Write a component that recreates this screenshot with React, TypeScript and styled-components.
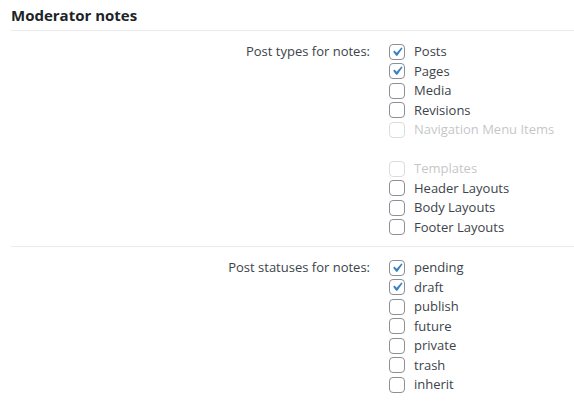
import { createGlobalStyle } from 'styled-components';
import styled from 'styled-components';

const GlobalStyle = createGlobalStyle`
  html, body {
    margin: 0;
    padding: 0;
    background: #ffffff;
  }
  body {
    font-family: "Open Sans", "Liberation Sans", Arial, sans-serif;
    font-size: 13px;
    color: #3c434a;
  }
`;

const Page = styled.div`
  padding: 6px 0 0 11px;
`;

const Title = styled.h2`
  margin: 0;
  padding-bottom: 5px;
  font-size: 15px;
  font-weight: 700;
  color: #1d2327;
  line-height: 19px;
  border-bottom: 1px solid #ececec;
`;

const Section = styled.div<{ $last?: boolean }>`
  display: grid;
  grid-template-columns: 359px 1fr;
  column-gap: 19px;
  padding: 11px 0 9px;
  border-bottom: 1px solid ${p => (p.$last ? 'transparent' : '#ececec')};
`;

const Label = styled.div`
  text-align: right;
  line-height: 19.5px;
  color: #3c434a;
`;

const List = styled.ul`
  list-style: none;
  margin: 0;
  padding: 0;
`;

const Item = styled.li<{ $disabled?: boolean }>`
  display: flex;
  align-items: center;
  gap: 9px;
  height: 19.5px;
  opacity: ${p => (p.$disabled ? 0.3 : 1)};
`;

const Spacer = styled.li`
  height: 19.5px;
`;

const Box = styled.span`
  box-sizing: border-box;
  width: 16px;
  height: 16px;
  border: 1px solid #8c8f94;
  border-radius: 4px;
  background: #fff;
  display: flex;
  align-items: center;
  justify-content: center;
  flex: none;
`;

const ItemText = styled.span`
  color: #3c434a;
  line-height: 19.5px;
`;

type Opt = { label: string; checked?: boolean; disabled?: boolean; gap?: boolean };

function Check({ checked }: { checked?: boolean }) {
  return (
    <Box>
      {checked && (
        <svg width="20" height="20" viewBox="0 0 20 20" style={{ margin: '-2px' }}>
          <path d="M14.83 4.89l1.34.94-5.81 8.38H9.02L5.78 9.67l1.34-1.25 2.57 2.4z" fill="#3582c4" />
        </svg>
      )}
    </Box>
  );
}

const postTypes: Opt[] = [
  { label: 'Posts', checked: true },
  { label: 'Pages', checked: true },
  { label: 'Media' },
  { label: 'Revisions' },
  { label: 'Navigation Menu Items', disabled: true },
  { label: '', gap: true },
  { label: 'Templates', disabled: true },
  { label: 'Header Layouts' },
  { label: 'Body Layouts' },
  { label: 'Footer Layouts' },
];

const statuses: Opt[] = [
  { label: 'pending', checked: true },
  { label: 'draft', checked: true },
  { label: 'publish' },
  { label: 'future' },
  { label: 'private' },
  { label: 'trash' },
  { label: 'inherit' },
];

function OptionList({ options }: { options: Opt[] }) {
  return (
    <List>
      {options.map((o, i) =>
        o.gap ? (
          <Spacer key={i} />
        ) : (
          <Item key={i} $disabled={o.disabled}>
            <Check checked={o.checked} />
            <ItemText>{o.label}</ItemText>
          </Item>
        )
      )}
    </List>
  );
}

export default function App() {
  return (
    <Page>
      <GlobalStyle />
      <Title>Moderator notes</Title>
      <Section>
        <Label>Post types for notes:</Label>
        <OptionList options={postTypes} />
      </Section>
      <Section $last>
        <Label>Post statuses for notes:</Label>
        <OptionList options={statuses} />
      </Section>
    </Page>
  );
}
